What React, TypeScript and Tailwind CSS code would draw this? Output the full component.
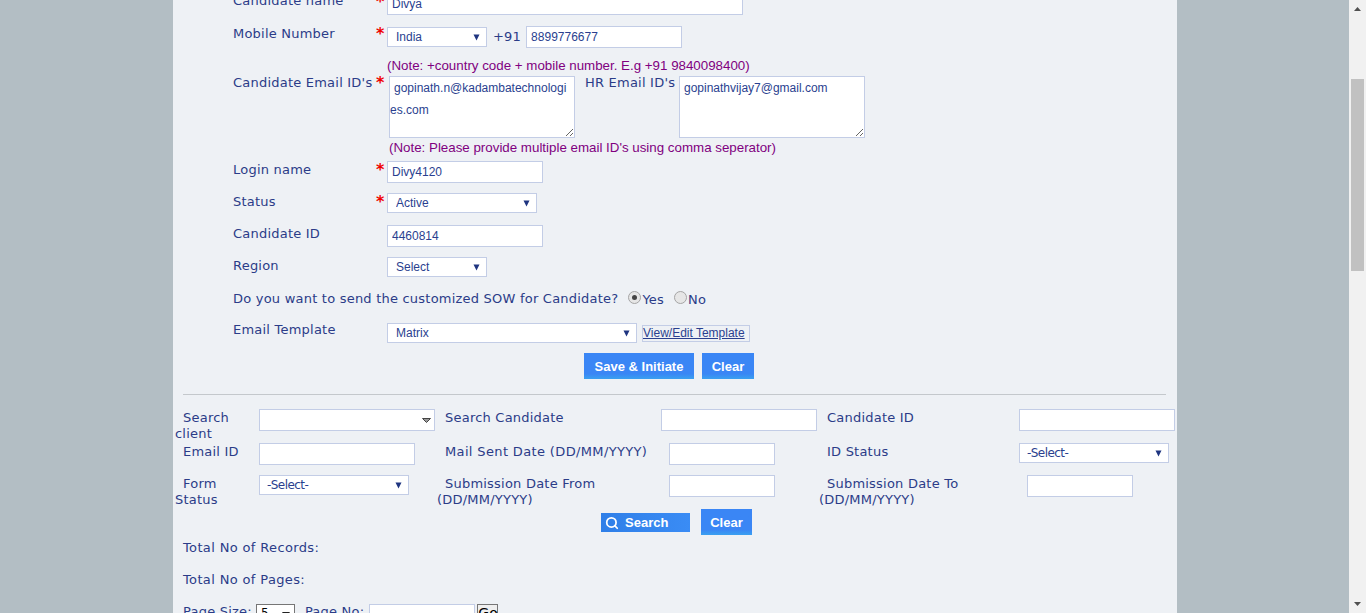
import { Search } from 'lucide-react';
import type { ReactNode } from 'react';

const inputCls =
  'block h-[22px] border border-[#c3cde6] bg-white pl-[4px] text-[12px] tracking-normal text-[#2a3f8f] outline-none';
const labelCls = "font-['DejaVu_Sans',sans-serif] text-[13px] leading-[16px] tracking-[0.22px] text-[#2b3c88]";
const noteCls = 'text-[13.33px] leading-[19px] text-[#800080]';
const filterCols = 'grid-cols-[84px_178px_224px_158px_200px_160px]';

function Star({ offset = '' }: { offset?: string }) {
  return <div className={`font-['DejaVu_Sans',sans-serif] text-[16px] leading-[16px] font-bold text-[#f00000] ${offset}`}>*</div>;
}

function Drop({ value, className, textCls = 'pl-[8px] tracking-normal' }: { value: string; className: string; textCls?: string }) {
  return (
    <div className={`relative h-[20px] ${className}`}>
      <select
        defaultValue={value}
        className={`block h-full w-full appearance-none rounded-none border border-[#c3cde6] bg-white text-[12px] text-[#2a3f8f] outline-none ${textCls}`}
      >
        <option>{value}</option>
      </select>
      <svg className="pointer-events-none absolute top-[7px] right-[7px] h-[7px] w-[7px]" viewBox="0 0 7 7">
        <path d="M0.5 0.5h6L3.5 6.5z" fill="#1f3580" />
      </svg>
    </div>
  );
}

function Row({ label, star, h, mt, lp = '', children }: { label: string; star?: string; h: string; mt: string; lp?: string; children: ReactNode }) {
  return (
    <div className={`flex items-start ${h} ${mt}`}>
      <div className={`w-[143px] shrink-0 ${labelCls} ${lp}`}>{label}</div>
      <div className="w-[11px] shrink-0">{star !== undefined && <Star offset={star} />}</div>
      {children}
    </div>
  );
}

function BlueButton({ children, className }: { children: ReactNode; className: string }) {
  return (
    <button className={`bg-gradient-to-b from-[#3a86f5] from-80% to-[#3aa0f0] pt-px text-center text-[13px] font-bold text-white ${className}`}>
      {children}
    </button>
  );
}

function Radio({ checked }: { checked?: boolean }) {
  return (
    <span className="flex h-[13px] w-[13px] items-center justify-center rounded-full border border-[#a5a5a5] bg-[#e6e6e6]">
      {checked && <span className="h-[5px] w-[5px] rounded-full bg-[#444]" />}
    </span>
  );
}

export default function App() {
  return (
    <div className="flex h-[613px] overflow-hidden bg-[#b3bec4] font-['Liberation_Sans',Arial,sans-serif]">
      <div className="ml-[173px] h-full w-[1004px] shrink-0 overflow-hidden bg-[#eef1f5]">
        {/* Candidate form */}
        <div className="pl-[60px]">
          <Row label="Candidate name" star="mt-px" h="h-[22px]" mt="-mt-[7px]">
            <input readOnly value="Divya" className={`${inputCls} w-[356px]`} />
          </Row>
          <Row label="Mobile Number" star="" h="h-[22px]" mt="mt-[11px]">
            <Drop value="India" className="mt-[1px] w-[100px]" />
            <span className={`ml-[6px] pt-[3px] ${labelCls}`}>+91</span>
            <input readOnly value="8899776677" className={`${inputCls} ml-[5px] w-[156px]`} />
          </Row>
          <div className={`mt-[8px] ml-[154px] h-[19px] ${noteCls}`}>
            (Note: +country code + mobile number. E.g +91 9840098400)
          </div>
          <Row label="Candidate Email ID's" star="-mt-px" h="h-[62px]" mt="mt-[1px]" lp="-mt-px">
            <textarea
              readOnly
              value="gopinath.n@kadambatechnologies.com"
              className="ml-[2px] h-[62px] w-[186px] border border-[#c3cde6] bg-white pr-[5px] indent-[4px] text-[12px] leading-[22px] text-[#2a3f8f] outline-none"
            />
            <span className={`ml-[10px] w-[94px] ${labelCls} -mt-px`}>HR Email ID's</span>
            <textarea
              readOnly
              value="gopinathvijay7@gmail.com"
              className="h-[62px] w-[186px] border border-[#c3cde6] bg-white pl-[4px] text-[12px] leading-[22px] text-[#2a3f8f] outline-none"
            />
          </Row>
          <div className={`ml-[156px] h-[19px] ${noteCls}`}>
            (Note: Please provide multiple email ID's using comma seperator)
          </div>
          <Row label="Login name" star="mt-px" h="h-[22px]" mt="mt-[4px]" lp="pt-px">
            <input readOnly value="Divy4120" className={`${inputCls} w-[156px]`} />
          </Row>
          <Row label="Status" star="mt-px" h="h-[20px]" mt="mt-[10px]" lp="pt-px">
            <Drop value="Active" className="w-[150px]" />
          </Row>
          <Row label="Candidate ID" h="h-[22px]" mt="mt-[12px]" lp="pt-px">
            <input readOnly value="4460814" className={`${inputCls} w-[156px]`} />
          </Row>
          <Row label="Region" h="h-[20px]" mt="mt-[10px]" lp="pt-px">
            <Drop value="Select" className="w-[100px]" />
          </Row>
          <div className={`mt-[12px] flex h-[20px] items-center ${labelCls}`}>
            <span>Do you want to send the customized SOW for Candidate?</span>
            <span className="-mt-[4px] ml-[10px]"><Radio checked /></span>
            <span className="mt-[2px] ml-[1px]">Yes</span>
            <span className="-mt-[4px] ml-[10px]"><Radio /></span>
            <span className="mt-[2px] ml-[1px]">No</span>
          </div>
          <Row label="Email Template" h="h-[20px]" mt="mt-[14px]" lp="-mt-px">
            <Drop value="Matrix" className="w-[250px]" />
            <a className="mt-[2px] ml-[5px] h-[17px] w-[108px] border border-[#c3cde6] text-[12px] leading-[15px] text-[#2a3f8f] underline">
              View/Edit Template
            </a>
          </Row>
        </div>
        <div className="mt-[10px] ml-[411px] flex gap-[8px]">
          <BlueButton className="h-[26px] w-[110px]">Save &amp; Initiate</BlueButton>
          <BlueButton className="h-[26px] w-[52px]">Clear</BlueButton>
        </div>
        <div className="mt-[15px] ml-[10px] h-px w-[983px] bg-[#c4c8cc]" />

        {/* Search filters */}
        <div className="mt-[14px] pl-[2px]">
          <div className={`grid h-[34px] ${filterCols} items-start ${labelCls}`}>
            <div className="pt-px indent-[8px]">Search client</div>
            <div className="relative h-[22px] w-[176px] border border-[#c3cde6] bg-white">
              <svg className="absolute top-[8px] right-[3px] h-[5px] w-[9px]" viewBox="0 0 9 5">
                <path d="M0.5 0.5h8L4.5 4.5z" fill="#999" stroke="#444" />
              </svg>
            </div>
            <div className="pt-px indent-[8px]">Search Candidate</div>
            <input className={`${inputCls} w-[156px]`} />
            <div className="pt-px indent-[8px]">Candidate ID</div>
            <input className={`${inputCls} w-[156px]`} />
          </div>
          <div className={`grid h-[32px] ${filterCols} items-start ${labelCls}`}>
            <div className="pt-px indent-[8px]">Email ID</div>
            <input className={`${inputCls} w-[156px]`} />
            <div className="pt-px indent-[8px] tracking-[0.36px] whitespace-nowrap">Mail Sent Date (DD/MM/YYYY)</div>
            <input className={`${inputCls} ml-[8px] w-[106px]`} />
            <div className="pt-px indent-[8px]">ID Status</div>
            <Drop value="-Select-" className="w-[150px]" textCls="pl-[7px] tracking-[-0.55px]" />
          </div>
          <div className={`grid h-[34px] ${filterCols} items-start ${labelCls}`}>
            <div className="pt-px indent-[8px]">Form Status</div>
            <Drop value="-Select-" className="w-[150px]" textCls="pl-[7px] tracking-[-0.55px]" />
            <div className="pt-px indent-[8px]">Submission Date From (DD/MM/YYYY)</div>
            <input className={`${inputCls} ml-[8px] w-[106px]`} />
            <div className="pt-px indent-[8px]">Submission Date To (DD/MM/YYYY)</div>
            <input className={`${inputCls} ml-[8px] w-[106px]`} />
          </div>
        </div>
        <div className="ml-[428px] flex items-center">
          <button className="mt-px flex h-[19px] w-[89px] items-center bg-gradient-to-r from-[#2f7fe8] to-[#3a8cf5] pl-[4px] text-[13px] font-bold text-white">
            <Search className="h-[14px] w-[14px]" strokeWidth={3} />
            <span className="ml-[6px]">Search</span>
          </button>
          <BlueButton className="ml-[11px] h-[26px] w-[51px]">Clear</BlueButton>
        </div>
        <div className={`mt-[5px] pl-[10px] ${labelCls}`}>
          <div className="h-[32px] tracking-[0.36px]">Total No of Records:</div>
          <div className="h-[32px] tracking-[0.36px]">Total No of Pages:</div>
          <div className="flex items-start">
            <span>Page Size:</span>
            <div className="relative ml-[4px] h-[20px] w-[39px] border border-[#767676] bg-white pl-[4px] text-[12px] text-black">
              5
              <svg className="absolute top-[7px] right-[4px] h-[6px] w-[8px]" viewBox="0 0 8 6">
                <path d="M0 0h8L4 6z" fill="#222" />
              </svg>
            </div>
            <span className="ml-[10px]">Page No:</span>
            <input className="ml-[5px] h-[22px] w-[106px] border border-[#c3cde6] bg-white" />
            <button className="ml-[2px] h-[22px] w-[21px] border border-[#767676] bg-[#efefef] pb-[5px] text-[14px] leading-none tracking-normal text-black">Go</button>
          </div>
        </div>
      </div>

      {/* Scrollbar */}
      <div className="ml-[172px] flex h-full w-[17px] flex-col bg-[#f1f1f1] pl-[2px]">
        <svg className="mt-[7px] ml-[3px] h-[4px] w-[7px] shrink-0" viewBox="0 0 7 4">
          <path d="M3.5 0L7 4H0z" fill="#505050" />
        </svg>
        <div className="mt-[68px] h-[192px] w-[13px] bg-[#c1c1c1]" />
        <svg className="mt-auto mb-[7px] ml-[3px] h-[4px] w-[7px] shrink-0" viewBox="0 0 7 4">
          <path d="M0 0h7L3.5 4z" fill="#505050" />
        </svg>
      </div>
    </div>
  );
}
